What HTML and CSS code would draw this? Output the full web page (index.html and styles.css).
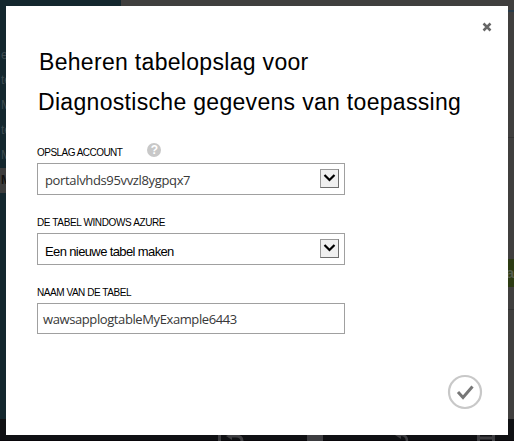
FILE: index.html
```html
<!DOCTYPE html>
<html lang="nl">
<head>
<meta charset="utf-8">
<title>Beheren tabelopslag</title>
<link rel="stylesheet" href="styles.css">
</head>
<body>
<div class="portal">
  <div class="workspace">
    <nav class="sidebar">
      <span>e</span><span>te</span><span>M</span><span>te</span><span>M</span><span class="selected">M</span>
    </nav>
    <div class="content">
      <i class="line blue"></i><i class="line first"></i>
      <span class="badge">a</span><i class="line last"></i>
    </div>
  </div>
  <footer class="commands">
    <svg width="514" height="22" viewBox="0 0 514 22" fill="none" stroke="#3d3d40">
      <path d="M219.5 14v8" stroke-width="3"/>
      <path d="M230 17h6q6 0 6 5" stroke-width="3"/><path d="M226 17l6-3v7z" fill="#3d3d40" stroke="none"/>
      <path d="M307 14h16v8h-16z" fill="#3d3d40" stroke="none"/>
      <path d="M398 16q9-1 9 6" stroke-width="2.500"/><path d="M395 16l6-2v6z" fill="#3d3d40" stroke="none"/>
      <path d="M478.500 14v8M493.500 14v8M480 19h12" stroke-width="3"/>
    </svg>
  </footer>
</div>
<main class="dialog">
  <button class="close" aria-label="Sluiten"><svg width="10" height="10" viewBox="0 0 10 10"><path d="M1.500 1.500l7 7M8.500 1.500l-7 7" stroke="#666" stroke-width="2.500"/></svg></button>
  <h1><span class="line-one">Beheren tabelopslag voor</span><span class="line-two">Diagnostische gegevens van toepassing</span></h1>
  <div class="field">
    <div class="label"><span class="l1">OPSLAG ACCOUNT</span><span class="help">?</span></div>
    <div class="box"><span class="value v1">portalvhds95vvzl8ygpqx7</span><span class="arrow"><svg width="17" height="17" viewBox="0 0 17 17"><path d="M3.500 5l5 5 5-5" fill="none" stroke="#000" stroke-width="2.200"/></svg></span></div>
  </div>
  <div class="field">
    <div class="label"><span class="l2">DE TABEL WINDOWS AZURE</span></div>
    <div class="box"><span class="value v2">Een nieuwe tabel maken</span><span class="arrow"><svg width="17" height="17" viewBox="0 0 17 17"><path d="M3.500 5l5 5 5-5" fill="none" stroke="#000" stroke-width="2.200"/></svg></span></div>
  </div>
  <div class="field">
    <div class="label"><span class="l3">NAAM VAN DE TABEL</span></div>
    <div class="box text"><span class="value v3">wawsapplogtableMyExample6443</span></div>
  </div>
  <button class="confirm" aria-label="Voltooien"><svg width="36" height="36" viewBox="0 0 36 36" fill="none"><circle cx="18" cy="18" r="16" stroke="#c8c8c8" stroke-width="2.200"/><path d="M11 18l5 5.500L25.500 12.500" stroke="#777" stroke-width="3"/></svg></button>
</main>
</body>
</html>
```
FILE: styles.css
```css
* { box-sizing: border-box; }
body { margin: 0; width: 514px; height: 441px; overflow: hidden; font-family: "Liberation Sans", Arial, sans-serif; }
.portal { height: 441px; display: flex; flex-direction: column; background: #101114; }
.workspace { height: 419px; display: flex; }
.sidebar { width: 121px; padding-top: 43px; background: #14272e; color: #3d4b50; font-size: 12px; line-height: 25px; }
.sidebar span { display: block; height: 25px; padding-left: 1px; }
.sidebar .selected { background: #3d3d3d; color: #111; font-weight: bold; }
.content { flex: 1; display: flex; flex-direction: column; align-items: flex-end; background: #403f3e; }
.line { width: 7px; height: 1px; background: #333; }
.line.blue { height: 2px; margin-top: 10px; background: #293c4a; }
.line.first { margin-top: 125px; }
.badge { width: 6px; height: 28px; margin-top: 121px; background: #2c3b13; color: #555c4b; font: bold 15px/27px "Liberation Sans", sans-serif; text-indent: -2px; overflow: hidden; }
.line.last { margin-top: 22px; }
.commands { height: 22px; border-bottom: 1px solid #09070b; }
.commands svg { display: block; }
.dialog { position: absolute; left: 6px; top: 6px; width: 502px; height: 429px; padding: 16px 26px 0 31px; background: #fff; display: flex; flex-direction: column; }
button { padding: 0; border: 0; background: none; }
button svg { display: block; }
.close { align-self: flex-end; height: 10px; margin-right: -10px; }
h1 { margin: 10px 0 0; font-size: 23px; font-weight: normal; line-height: 40px; letter-spacing: .31px; color: #000; white-space: nowrap; }
h1 span { display: block; }
.line-one { padding-left: 2px; }
.line-two { padding-left: 1px; }
.field { width: 308px; margin-bottom: 16px; }
.field:first-of-type { margin-top: 19px; }
.label { height: 22px; display: flex; align-items: center; font-size: 10px; color: #000; white-space: nowrap; }
.l1 { letter-spacing: -.53px; }
.l2 { letter-spacing: -.38px; }
.l3 { letter-spacing: -.45px; }
.help { width: 14px; height: 14px; margin: -5px 0 0 25px; border-radius: 50%; background: #c8c8c8; color: #fff; font: bold 12px/14px "Liberation Sans", sans-serif; text-align: center; }
.box { height: 32px; border: 1px solid #a0a0a0; padding: 0 5px 0 7px; display: flex; align-items: center; justify-content: space-between; color: #383838; font: 13px "Open Sans", sans-serif; white-space: nowrap; }
.box.text { height: 31px; padding-left: 5px; }
.v1 { letter-spacing: -.35px; padding-top: 1px; }
.v2 { font: 13px "Liberation Sans", sans-serif; letter-spacing: -.62px; padding-top: 5px; color: #000; }
.v3 { letter-spacing: -.4px; padding-top: 1px; }
.arrow { width: 19px; height: 19px; margin-top: -1px; border: 1px solid; border-color: #999 #6d6d6d #6d6d6d #999; background: #f0f0f0; }
.arrow svg { display: block; }
.confirm { align-self: flex-end; margin: 24px -1px 0 0; }
```
